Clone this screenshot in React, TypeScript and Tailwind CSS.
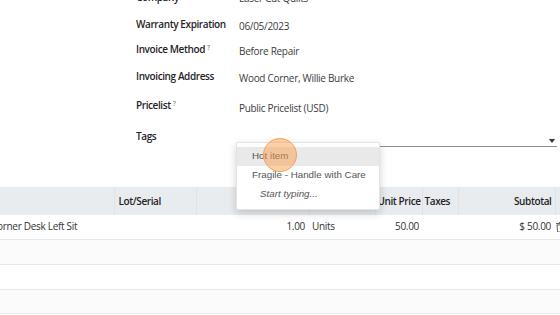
import React from "react";

const Row = ({ label, sup, value, h, vOffset = 0 }: { label: string; sup?: boolean; value?: string; h: string; vOffset?: number }) => (
  <div className={`flex items-start ${h}`}>
    <div className="w-[103px] shrink-0 font-semibold text-[10px] tracking-[-0.4px] text-[#1f2327]">
      {label}
      {sup && <sup className="ml-[2px] text-[7px] font-normal text-[#666]">?</sup>}
    </div>
    {value && (
      <div className="text-[10px] tracking-[-0.3px] text-[#3c3c3c]" style={{ marginTop: vOffset }}>
        {value}
      </div>
    )}
  </div>
);

export default function App() {
  return (
    <div
      className="relative w-[560px] h-[315px] overflow-hidden bg-white"
      style={{ fontFamily: '"Open Sans", "Noto Sans", sans-serif' }}
    >
      {/* form */}
      <div className="ml-[136px] mt-[-10px] flex flex-col">
        <Row label="Company" value="Laser Cut Quilts" h="h-[27px]" vOffset={1} />
        <Row label="Warranty Expiration" value="06/05/2023" h="h-[25px]" vOffset={2} />
        <Row label="Invoice Method" sup value="Before Repair" h="h-[27px]" vOffset={2} />
        <Row label="Invoicing Address" value="Wood Corner, Willie Burke" h="h-[29px]" vOffset={2} />
        <Row label="Pricelist" sup value="Public Pricelist (USD)" h="h-[31px]" vOffset={3} />
        <div className="flex items-start h-[58px]">
          <div className="w-[100px] shrink-0 font-semibold text-[10px] tracking-[-0.4px] text-[#1f2327]">Tags</div>
          <div className="relative mt-[4px] h-[14px] w-[321px] border-b border-[#8a8f94]">
            <div className="absolute right-[2px] top-[6px] w-0 h-0 border-l-[3px] border-r-[3px] border-t-[4px] border-l-transparent border-r-transparent border-t-[#333]" />
          </div>
        </div>
      </div>

      {/* table */}
      <table className="table-fixed border-collapse w-[580px] text-[10px] tracking-[-0.3px] text-[#333]">
        <colgroup>
          <col className="w-[114px]" />
          <col className="w-[82px]" />
          <col className="w-[113px]" />
          <col className="w-[66px]" />
          <col className="w-[47px]" />
          <col className="w-[36px]" />
          <col className="w-[97px]" />
          <col className="w-[25px]" />
        </colgroup>
        <thead>
          <tr className="h-[28px] bg-[#e9ecef] text-[#1f2327] tracking-[-0.4px]">
            <th className="border-r border-[#dfe2e6] text-left px-[4px]"></th>
            <th className="border-r border-[#dfe2e6] text-left px-[4px] font-semibold">Lot/Serial</th>
            <th className="border-r border-[#dfe2e6] text-right px-[4px] font-semibold">Quantity</th>
            <th className="border-r border-[#dfe2e6] text-left px-[4px] font-semibold">UoM</th>
            <th className="border-r border-[#dfe2e6] text-right px-[2px] font-semibold whitespace-nowrap">Unit Price</th>
            <th className="border-r border-[#dfe2e6] text-left px-[2px] font-semibold">Taxes</th>
            <th className="border-r border-[#dfe2e6] text-right px-[3px] font-semibold">Subtotal</th>
            <th></th>
          </tr>
        </thead>
        <tbody>
          <tr className="h-[24px] border-b border-[#e6e8eb] bg-white">
            <td className="whitespace-nowrap overflow-hidden"><span className="ml-[-9px]">Corner Desk Left Sit</span></td>
            <td></td>
            <td className="text-right px-[4px]">1.00</td>
            <td className="px-[3px]">Units</td>
            <td className="text-right px-[3px]">50.00</td>
            <td></td>
            <td className="text-right px-[4px]">$ 50.00</td>
            <td className="px-[1px]">
              <svg width="8" height="10" viewBox="0 0 8 10" className="text-[#666]">
                <rect x="0" y="1" width="8" height="1.2" fill="currentColor" />
                <rect x="3" y="0" width="2" height="1.2" fill="currentColor" />
                <path d="M1 3h6l-0.6 7H1.6z" fill="none" stroke="currentColor" strokeWidth="1" />
              </svg>
            </td>
          </tr>
          <tr className="h-[25px] border-b border-[#e6e8eb] bg-[#fbfbfb]"><td colSpan={8}></td></tr>
          <tr className="h-[25px] border-b border-[#e6e8eb] bg-white"><td colSpan={8}></td></tr>
          <tr className="h-[24px] border-b border-[#e6e8eb] bg-[#fbfbfb]"><td colSpan={8}></td></tr>
        </tbody>
      </table>

      {/* dropdown */}
      <div
        className="absolute left-[236px] top-[142px] w-[144px] h-[68px] bg-white rounded-[2px] border border-[#e3e3e3] shadow-[0_3px_8px_rgba(0,0,0,0.18)] py-[4px] text-[9.8px] text-[#555]"
        style={{ fontFamily: '"Liberation Sans", Arial, sans-serif' }}
      >
        <div className="h-[19px] flex items-center pl-[15px] bg-[#e9e9e9]">Hot item</div>
        <div className="h-[19px] flex items-center pl-[15px]">Fragile - Handle with Care</div>
        <div className="h-[19px] flex items-center pl-[23px] italic">Start typing...</div>
      </div>

      {/* click marker */}
      <div className="absolute left-[263px] top-[138px] w-[34px] h-[34px] rounded-full bg-[rgba(249,160,80,0.5)] border border-[#f3a35a]" />
    </div>
  );
}
